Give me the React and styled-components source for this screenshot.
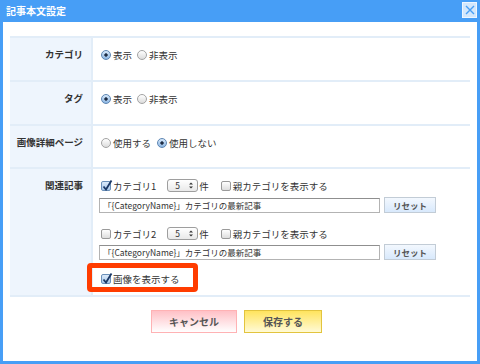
import React from "react";
import styled, { createGlobalStyle, css } from "styled-components";

const Global = createGlobalStyle`
  html, body { margin: 0; padding: 0; background: #fff; }
  body { font-family: "Noto Sans CJK JP", "Noto Sans", sans-serif; color: #333; }
`;

const Dialog = styled.div`
  width: 480px;
  height: 364px;
  box-sizing: border-box;
  background: #479ef6;
  padding: 0 3px 3px;
  display: flex;
  flex-direction: column;
`;

const TitleBar = styled.div`
  height: 22px;
  display: flex;
  align-items: center;
  justify-content: space-between;
  padding: 0 0 0 3px;
`;

const Title = styled.div`
  color: #fff;
  font-weight: bold;
  font-size: 10px;
  line-height: 12px;
`;

const Close = styled.div`
  width: 15px;
  height: 16px;
  box-sizing: border-box;
  margin-top: 2px;
  align-self: flex-start;
  background: #d3e7fc;
  border: 1px solid #eef6ff;
  display: flex;
  align-items: center;
  justify-content: center;
`;

const Body = styled.div`
  flex: 1;
  background: #fff;
  padding: 14px 7px 0;
  display: flex;
  flex-direction: column;
`;

const Table = styled.div`
  border-top: 2px solid #e2edf8;
  display: flex;
  flex-direction: column;
`;

const Row = styled.div`
  display: grid;
  grid-template-columns: 83px 1fr;
  box-sizing: border-box;
  border-bottom: 2px solid #e2edf8;
  height: ${(p) => p.$h}px;
`;

const Label = styled.div`
  background: #eef5fd;
  border-right: 2px solid #e2edf8;
  text-align: right;
  padding: 10px 8px 0 0;
  font-size: 9.5px;
  line-height: 13px;
  font-weight: bold;
  color: #333;
`;

const Cell = styled.div`
  padding: 10px 6px 0;
  display: flex;
  flex-direction: column;
`;

const Line = styled.div`
  display: flex;
  align-items: center;
  height: 13px;
  font-size: 9.5px;
  color: #333;
  margin-top: ${(p) => p.$mt || 0}px;
  position: relative;
  width: max-content;
`;

const Option = styled.span`
  display: inline-flex;
  align-items: center;
  margin-right: ${(p) => p.$mr || 0}px;
  margin-left: ${(p) => p.$ml || 0}px;
`;

const Radio = styled.span`
  display: inline-block;
  width: 10px;
  height: 10px;
  box-sizing: border-box;
  border-radius: 50%;
  border: 1px solid #a3a3a3;
  background: linear-gradient(#ffffff, #dcdcdc);
  margin: 0 2px;
  ${(p) =>
    p.$checked &&
    css`
      border-color: #5d86b3;
      background: radial-gradient(circle, #1d2c44 0 1.4px, transparent 1.9px),
        linear-gradient(#d6e8fa, #8db6e2);
    `}
`;

const Box = styled.span`
  display: inline-block;
  position: relative;
  width: 10px;
  height: 10px;
  box-sizing: border-box;
  border-radius: 2px;
  border: 1px solid #9a9a9a;
  background: linear-gradient(#ffffff, #dedede);
  margin: 0 2px;
  ${(p) =>
    p.$checked &&
    css`
      border-color: #6a8fb8;
      background: linear-gradient(#dbeafa, #a9c8ea);
    `}
`;

const CheckMark = styled.svg`
  position: absolute;
  left: 0px;
  top: -3px;
`;

const Select = styled.span`
  display: inline-flex;
  align-items: center;
  justify-content: space-between;
  width: 31px;
  height: 13px;
  box-sizing: border-box;
  border: 1px solid #9e9e9e;
  border-radius: 3px;
  background: linear-gradient(#ffffff, #e9e9e9);
  padding: 0 4px 0 7px;
  margin: 0 1px 0 11px;
  font-size: 8.5px;
  line-height: 11px;
`;

const Input = styled.div`
  width: 281px;
  height: 15px;
  box-sizing: border-box;
  border: 1px solid #b3b3b3;
  border-top-color: #8f8f8f;
  background: #fff;
  font-size: 8.5px;
  line-height: 13px;
  padding-left: 3px;
  color: #333;
  white-space: nowrap;
  overflow: hidden;
`;

const InputRow = styled.div`
  display: flex;
  align-items: center;
  margin-top: ${(p) => p.$mt}px;
`;

const ResetButton = styled.div`
  width: 52px;
  height: 16px;
  box-sizing: border-box;
  margin-left: 4px;
  border: 1px solid #c2ccd6;
  background: linear-gradient(#f3f8fe, #d8e9fc);
  font-size: 8.5px;
  line-height: 14px;
  text-align: center;
  color: #555;
  font-weight: bold;
`;

const Highlight = styled.div`
  position: absolute;
  left: -12px;
  top: -9px;
  width: 111px;
  height: 29px;
  box-sizing: border-box;
  border: 5px solid #ff3c00;
  border-radius: 4px;
  pointer-events: none;
`;

const ButtonBar = styled.div`
  display: flex;
  justify-content: center;
  gap: 7px;
  padding: 13px 7px 0 0;
`;

const Button = styled.div`
  height: 23px;
  width: ${(p) => p.$w}px;
  box-sizing: border-box;
  font-size: 10px;
  font-weight: bold;
  color: #555;
  display: flex;
  align-items: center;
  justify-content: center;
  ${(p) =>
    p.$kind === "cancel"
      ? css`
          border: 1px solid #ffb2b4;
          background: linear-gradient(#ffc0c6, #ffffff);
        `
      : css`
          border: 1px solid #e2c43e;
          background: linear-gradient(#ffe45e, #fffad6);
        `}
`;

function RadioOpt({ checked, children, mr }) {
  return (
    <Option $mr={mr}>
      <Radio $checked={checked} />
      {children}
    </Option>
  );
}

function Check({ checked }) {
  return (
    <Box $checked={checked}>
      {checked && (
        <CheckMark width="11" height="12" viewBox="0 0 11 12">
          <path d="M1.5 7.5 L4 10.5 L9.5 1.5" fill="none" stroke="#1b3866" strokeWidth="1.8" />
        </CheckMark>
      )}
    </Box>
  );
}

function Arrows() {
  return (
    <svg width="4" height="7" viewBox="0 0 4 7">
      <path d="M0 2.5 L2 0.5 L4 2.5 Z M0 4.5 L2 6.5 L4 4.5 Z" fill="#333" />
    </svg>
  );
}

function CategoryGroup({ n, checked, first }) {
  return (
    <>
      <Line $mt={first ? 0 : 14}>
        <Check checked={checked} />
        カテゴリ{n}
        <Select>
          5<Arrows />
        </Select>
        件
        <Option $ml={10}>
          <Check />
          親カテゴリを表示する
        </Option>
      </Line>
      <InputRow $mt={first ? 5 : 4}>
        <Input>「{"{"}CategoryName{"}"}」カテゴリの最新記事</Input>
        <ResetButton>リセット</ResetButton>
      </InputRow>
    </>
  );
}

export default function App() {
  return (
    <>
      <Global />
      <Dialog>
        <TitleBar>
          <Title>記事本文設定</Title>
          <Close>
            <svg width="10" height="10" viewBox="0 0 10 10">
              <path d="M1 1 L9 9 M9 1 L1 9" stroke="#4a9ff5" strokeWidth="1.4" />
            </svg>
          </Close>
        </TitleBar>
        <Body>
          <Table>
            <Row $h={44}>
              <Label>カテゴリ</Label>
              <Cell>
                <Line>
                  <RadioOpt checked mr={3}>表示</RadioOpt>
                  <RadioOpt>非表示</RadioOpt>
                </Line>
              </Cell>
            </Row>
            <Row $h={44}>
              <Label>タグ</Label>
              <Cell>
                <Line>
                  <RadioOpt checked mr={3}>表示</RadioOpt>
                  <RadioOpt>非表示</RadioOpt>
                </Line>
              </Cell>
            </Row>
            <Row $h={43}>
              <Label>画像詳細ページ</Label>
              <Cell>
                <Line>
                  <RadioOpt mr={4}>使用する</RadioOpt>
                  <RadioOpt checked>使用しない</RadioOpt>
                </Line>
              </Cell>
            </Row>
            <Row $h={128}>
              <Label>関連記事</Label>
              <Cell>
                <CategoryGroup n={1} checked first />
                <CategoryGroup n={2} />
                <Line $mt={12}>
                  <Check checked />
                  画像を表示する
                  <Highlight />
                </Line>
              </Cell>
            </Row>
          </Table>
          <ButtonBar>
            <Button $kind="cancel" $w={86}>キャンセル</Button>
            <Button $kind="save" $w={78}>保存する</Button>
          </ButtonBar>
        </Body>
      </Dialog>
    </>
  );
}
